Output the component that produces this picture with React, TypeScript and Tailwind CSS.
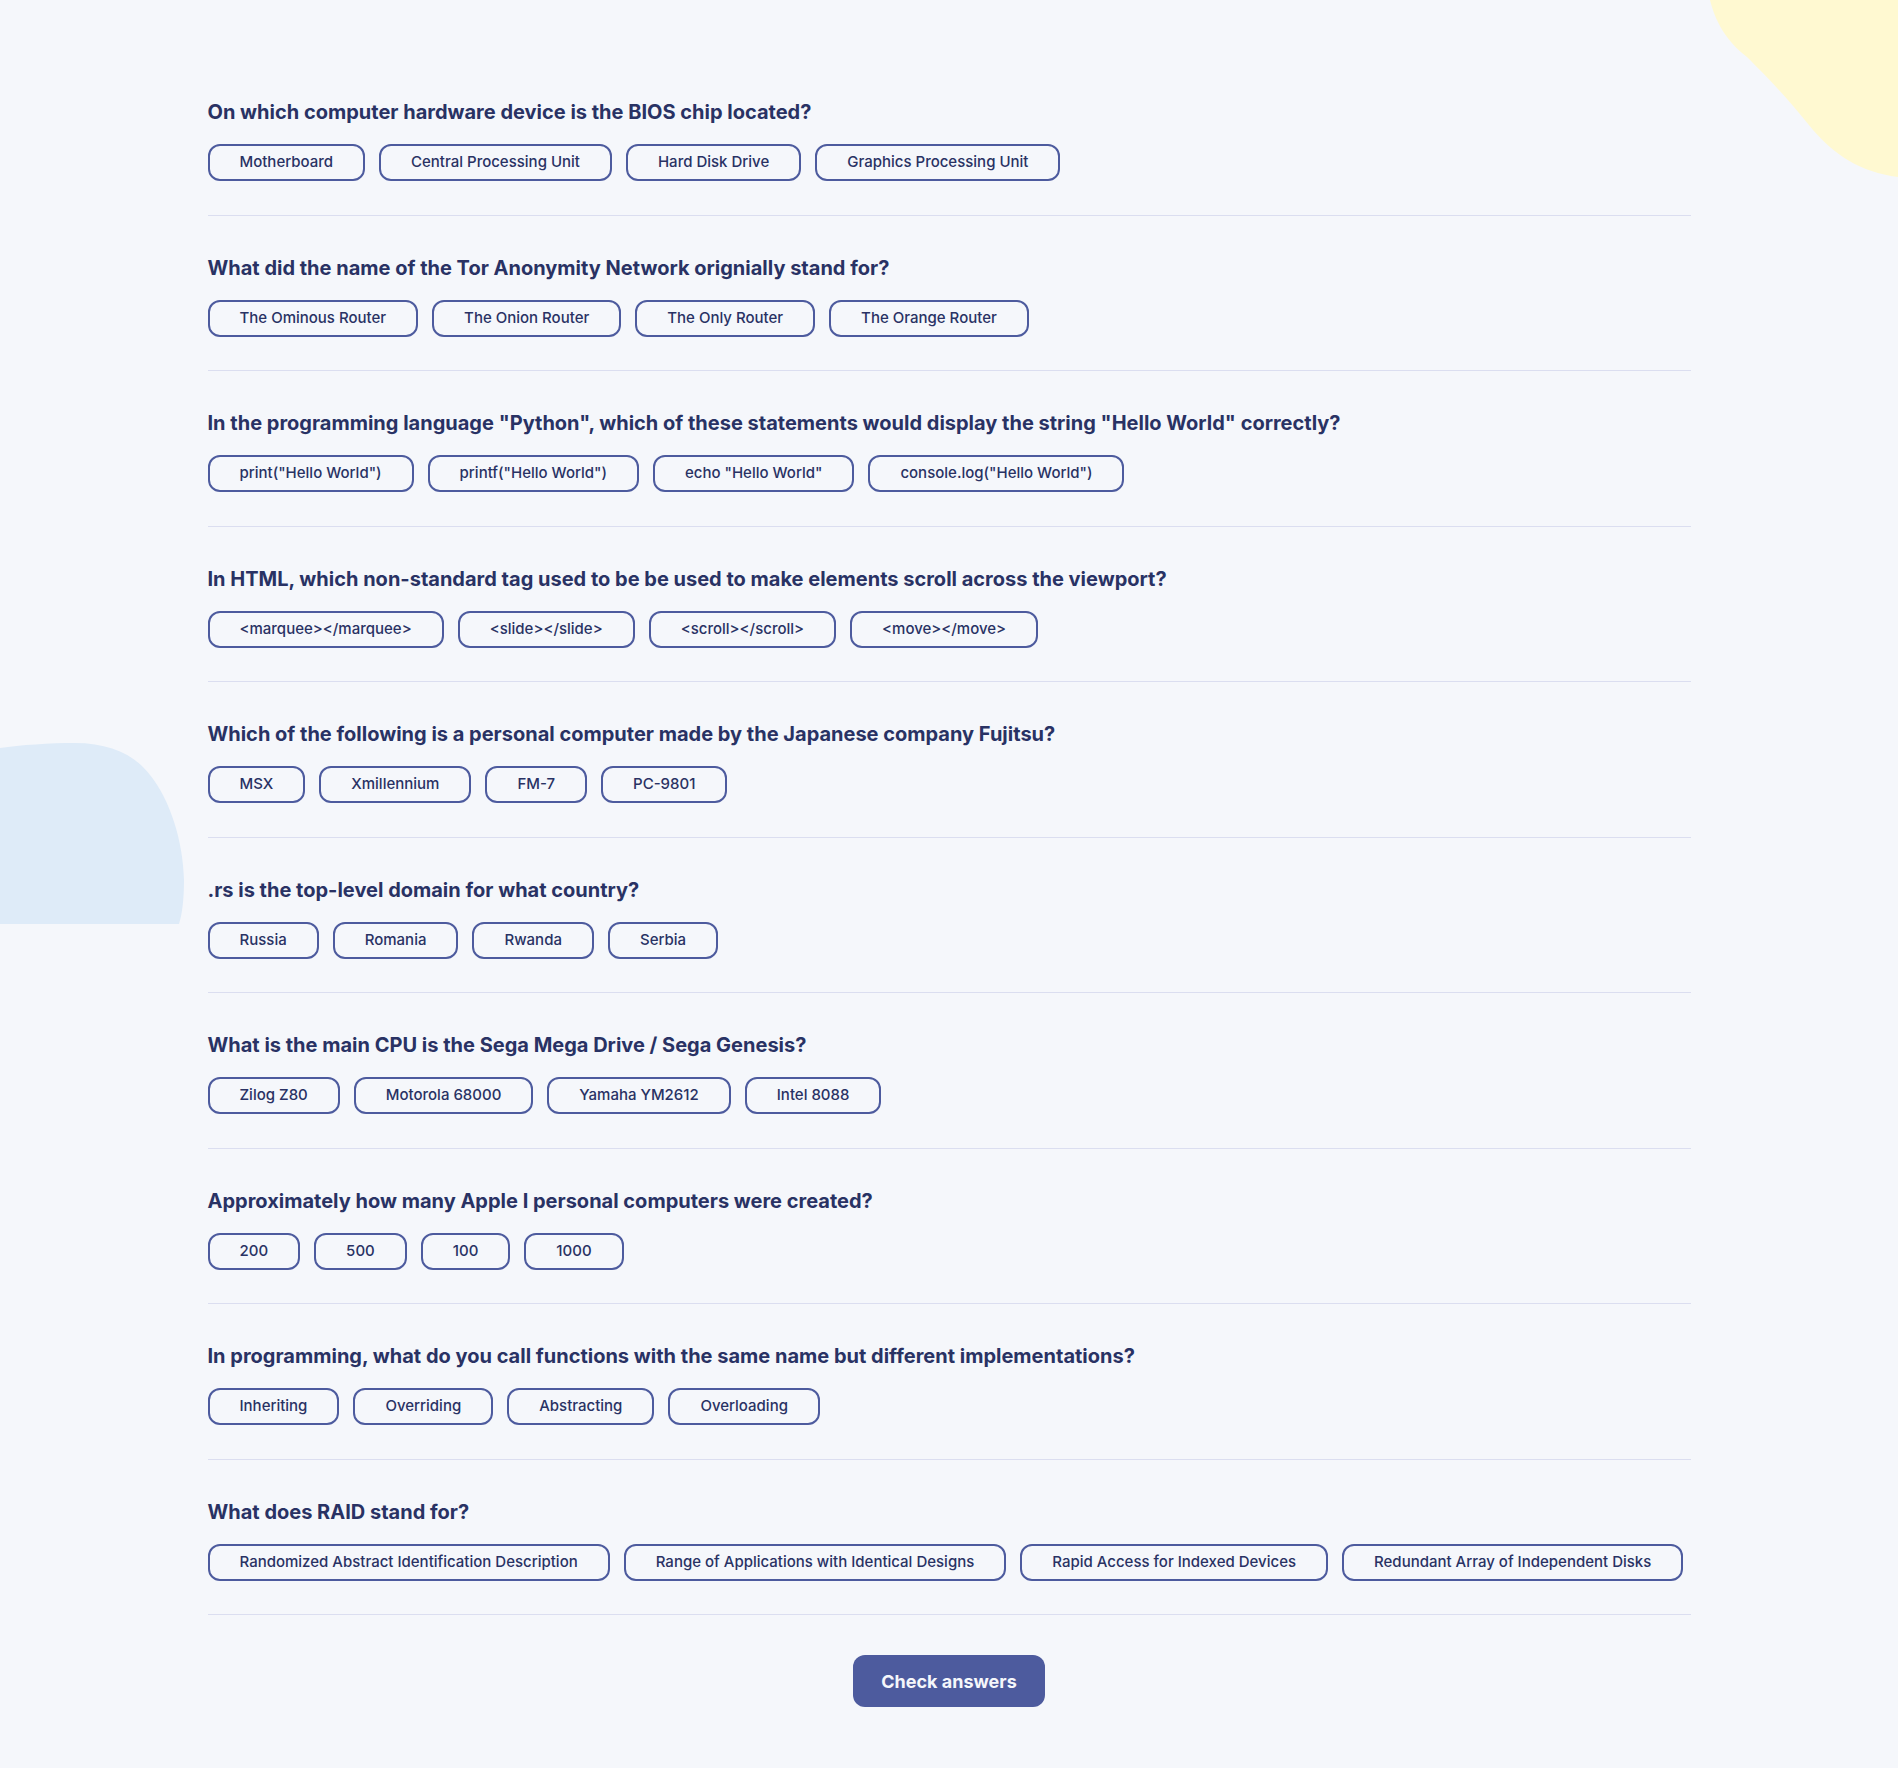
import { useState } from "react"

const questions = [
  {
    q: "On which computer hardware device is the BIOS chip located?",
    a: ["Motherboard", "Central Processing Unit", "Hard Disk Drive", "Graphics Processing Unit"],
  },
  {
    q: "What did the name of the Tor Anonymity Network orignially stand for?",
    a: ["The Ominous Router", "The Onion Router", "The Only Router", "The Orange Router"],
  },
  {
    q: 'In the programming language "Python", which of these statements would display the string "Hello World" correctly?',
    a: ['print("Hello World")', 'printf("Hello World")', 'echo "Hello World"', 'console.log("Hello World")'],
  },
  {
    q: "In HTML, which non-standard tag used to be be used to make elements scroll across the viewport?",
    a: ["<marquee></marquee>", "<slide></slide>", "<scroll></scroll>", "<move></move>"],
  },
  {
    q: "Which of the following is a personal computer made by the Japanese company Fujitsu?",
    a: ["MSX", "Xmillennium", "FM-7", "PC-9801"],
  },
  {
    q: ".rs is the top-level domain for what country?",
    a: ["Russia", "Romania", "Rwanda", "Serbia"],
  },
  {
    q: "What is the main CPU is the Sega Mega Drive / Sega Genesis?",
    a: ["Zilog Z80", "Motorola 68000", "Yamaha YM2612", "Intel 8088"],
  },
  {
    q: "Approximately how many Apple I personal computers were created?",
    a: ["200", "500", "100", "1000"],
  },
  {
    q: "In programming, what do you call functions with the same name but different implementations?",
    a: ["Inheriting", "Overriding", "Abstracting", "Overloading"],
  },
  {
    q: "What does RAID stand for?",
    a: [
      "Randomized Abstract Identification Description",
      "Range of Applications with Identical Designs",
      "Rapid Access for Indexed Devices",
      "Redundant Array of Independent Disks",
    ],
  },
]

function Question({ q, a }: { q: string; a: string[] }) {
  const [picked, setPicked] = useState<string | null>(null)

  return (
    <div className="pt-[38px] pb-[33.5px] border-b border-[#dbdef0]">
      <h2 className="text-[20px] leading-[28px] font-bold text-[#293264]">{q}</h2>
      <div className="mt-[18px] flex gap-[14px]">
        {a.map((ans) => (
          <button
            key={ans}
            onClick={() => setPicked(ans)}
            className={
              "h-[37px] px-[30px] rounded-[12px] border-2 border-[#4d5b9e] text-[15px] font-medium text-[#293264] " +
              (picked === ans ? "bg-[#d6dbf5]" : "bg-transparent")
            }
          >
            {ans}
          </button>
        ))}
      </div>
    </div>
  )
}

export default function App() {
  return (
    <div
      className="relative min-h-screen overflow-hidden bg-[#f5f7fb] pt-[60px] pb-[61px]"
      style={{ fontFamily: "Inter, 'Noto Sans', sans-serif" }}
    >
      {/* yellow blob, top right */}
      <svg className="absolute right-0 top-0" width="188" height="178" viewBox="0 0 188 178">
        <path d="M0,0 C5,20 15,40 37,57 C55,75 75,95 103,130 C125,155 150,172 188,177 L188,0 Z" fill="#fff9d1" />
      </svg>
      {/* blue blob, left */}
      <svg className="absolute left-0 top-[740px]" width="185" height="184" viewBox="0 0 185 184">
        <path d="M0,8 C20,5 50,3 75,3 C110,3 135,15 150,35 C170,60 183,100 184,140 C184,160 182,175 179,184 L0,184 Z" fill="#deebf8" />
      </svg>

      <div className="relative mx-auto w-[1483px]">
        {questions.map((item) => (
          <Question key={item.q} q={item.q} a={item.a} />
        ))}
        <div className="mt-[40px] flex justify-center">
          <button className="h-[52px] w-[192px] rounded-[12px] bg-[#4d5b9e] text-[18px] font-bold text-[#f5f7fb]">
            Check answers
          </button>
        </div>
      </div>
    </div>
  )
}
